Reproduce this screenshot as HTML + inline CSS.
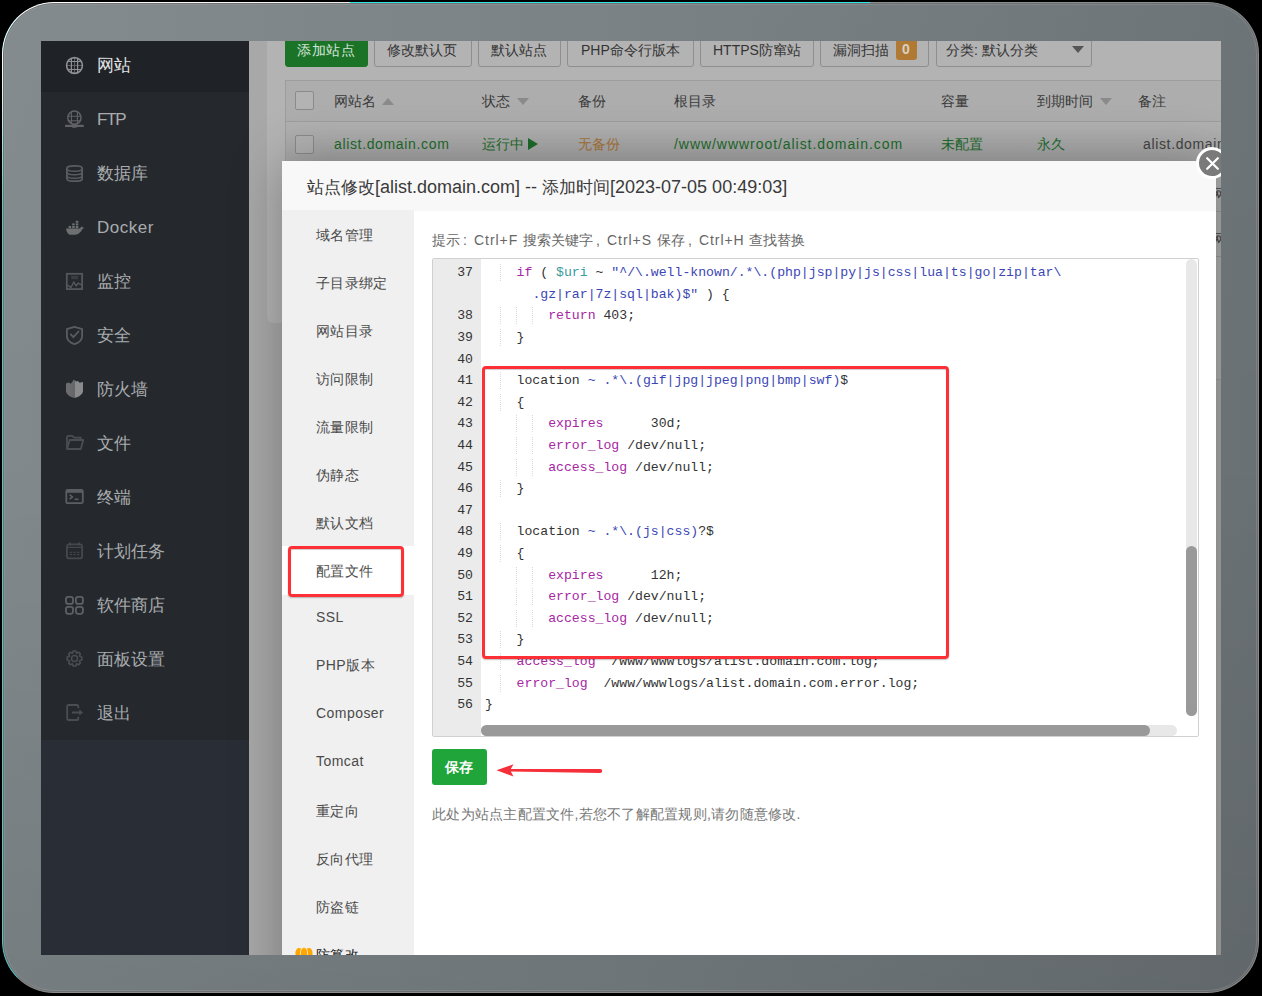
<!DOCTYPE html>
<html><head><meta charset="utf-8">
<style>
*{box-sizing:border-box}
html,body{margin:0;padding:0}
body{width:1262px;height:996px;background:#000;overflow:hidden;position:relative;font-family:"Liberation Sans",sans-serif;color:#333}
.a{position:absolute;white-space:nowrap}
#frame{position:absolute;left:2px;top:2px;width:1257px;height:991px;border-radius:52px;
 background:linear-gradient(180deg,rgba(255,255,255,.02) 0%,rgba(0,0,0,0) 45%,rgba(0,0,0,.09) 100%),linear-gradient(90deg,#81898c 0%,#788084 50%,#6a7175 100%);
 border:1px solid #8c8c8c;border-left-color:#4fc9c9;border-top-color:#8a9090}
#cy{position:absolute;left:350px;top:2px;width:520px;height:1px;background:#2ee8e8}
#hl{position:absolute;left:2px;top:2px;width:1257px;height:991px;border-radius:52px;border:1.5px solid #fff;border-right-color:transparent;border-bottom-color:transparent;-webkit-mask-image:linear-gradient(165deg,#000 0%,rgba(0,0,0,.9) 6%,transparent 16%)}
#frame2{position:absolute;left:3px;top:3px;width:1255px;height:989px;border-radius:51px;box-shadow:inset 0 0 0 1px rgba(90,90,90,.55), inset 0 0 0 2px rgba(160,160,160,.35)}
#vp{position:absolute;left:41px;top:41px;width:1180px;height:914px;overflow:hidden;background:#a8a8a8}
#side{position:absolute;left:0;top:0;width:208px;height:914px;background:#292d35}
.mi{position:absolute;left:0;width:208px;height:54px;background:#25292d}
.mi.act{background:#1f2226}
.mi span{position:absolute;left:56px;top:1.5px;font-size:17px;line-height:54px;color:#a9acaf}
.mi.act span{color:#e2e3e4}
.mi svg{position:absolute;left:25px;top:19.5px;width:18px;height:18px}
.btn{position:absolute;top:-10px;height:36px;border:1px solid #8e8e8e;border-radius:3px;background:#b3b3b3}
.t14{font-size:14px;line-height:20px}
.tri{position:absolute;width:0;height:0;border-left:6px solid transparent;border-right:6px solid transparent}
#dlg{position:absolute;left:241px;top:120px;width:934px;height:900px;background:#fff;box-shadow:1px 1px 50px rgba(0,0,0,.3)}
.ni{position:absolute;left:34px;font-size:14px;line-height:20px;color:#4a4a4a}
.code{font-family:"Liberation Mono",monospace;font-size:13.16px;color:#333;white-space:pre}
.ln{position:absolute;left:0;width:40px;text-align:right;height:21.6px;line-height:21.6px}
.cl{position:absolute;left:52px;height:21.6px;line-height:21.6px}
.k{color:#a626a4}.v{color:#3a9a9e}.s{color:#3b46b5}
.g{position:absolute;width:0;border-left:1px dotted #d9d9d9;height:17px}
.w{letter-spacing:.95px}
.fw{display:inline-block;width:14px;padding-left:3px}
</style></head><body>
<div id="frame"></div><div id="frame2"></div><div id="hl"></div><div id="cy"></div>
<div id="vp">
<div id="side">
<div class="mi act" style="top:-3.5px"><svg viewBox="0 0 18 18" style="overflow:visible"><circle cx="8.5" cy="8.5" r="7.9" fill="none" stroke="#8e9092" stroke-width="1.6"/><path d="M5.4 1.6v13.8M11.6 1.6v13.8M1.6 4.5h13.8M1.6 12.5h13.8" stroke="#8e9092" stroke-width="1.2"/><path d="M8.5 1v15M1 8.5h15" stroke="#8e9092" stroke-width="1" opacity=".55"/></svg><span>网站</span></div>
<div class="mi" style="top:50.5px"><svg viewBox="0 0 18 18" style="overflow:visible"><circle cx="8.4" cy="6.7" r="6.6" fill="none" stroke="#606265" stroke-width="1.5"/><path d="M5.4 1v11.5M11.4 1v11.5M2 5.2h12.8M2 9.8h12.8" stroke="#606265" stroke-width="1.1"/><path d="M-0.9 14.9h18.7" stroke="#606265" stroke-width="2.2"/><rect x="5.9" y="13.2" width="5" height="3.6" rx="1" fill="#606265"/></svg><span style="letter-spacing:-1.2px">FTP</span></div>
<div class="mi" style="top:104.5px"><svg viewBox="0 0 18 18" style="overflow:visible"><path d="M0.9 3.2C0.9 1.5 4.3 0.9 8.5 0.9S16.1 1.5 16.1 3.2V13.9C16.1 15.6 12.7 16.2 8.5 16.2S0.9 15.6 0.9 13.9Z" fill="none" stroke="#5a5d60" stroke-width="1.8"/><path d="M0.9 3.5C0.9 5.2 4.3 6.3 8.5 6.3S16.1 5.2 16.1 3.5M0.9 6.9C0.9 8.6 4.3 9.7 8.5 9.7S16.1 8.6 16.1 6.9M0.9 10.4C0.9 12.1 4.3 13.2 8.5 13.2S16.1 12.1 16.1 10.4" fill="none" stroke="#5a5d60" stroke-width="1.5"/></svg><span>数据库</span></div>
<div class="mi" style="top:158.5px"><svg viewBox="0 0 18 18" style="overflow:visible"><path d="M0 9.4H14.2C14.6 8.2 15.4 7.8 15.6 7.6L16.8 8.4C17.4 8.3 17.9 8.6 18 8.8C17.6 9.6 17 10 16.3 10C15 13.5 12 15.8 7.5 15.8H5C2.5 15.8 0.6 13.5 0 9.4Z" fill="#6d6f71"/><rect x="2.6" y="7" width="2.5" height="2.2" fill="#6d6f71"/><rect x="6.2" y="7" width="2.5" height="2.2" fill="#6d6f71"/><rect x="9.8" y="7" width="2.5" height="2.2" fill="#6d6f71"/><rect x="6.2" y="4.4" width="2.5" height="2" fill="#6d6f71"/><rect x="9.8" y="4.4" width="2.5" height="2" fill="#6d6f71"/><rect x="9.8" y="1.8" width="2.5" height="2" fill="#6d6f71"/></svg><span style="letter-spacing:.5px">Docker</span></div>
<div class="mi" style="top:212.5px"><svg viewBox="0 0 18 18" style="overflow:visible"><rect x="0.8" y="0.8" width="15.3" height="15.3" fill="none" stroke="#55585b" stroke-width="1.8"/><rect x="5.2" y="2.8" width="6.8" height="3.4" fill="#55585b" opacity=".45"/><path d="M1.2 11.8L4.8 14.6 7.8 9.2 10.2 12.8 12.2 10.2 16 12.2" fill="none" stroke="#55585b" stroke-width="1.4"/></svg><span>监控</span></div>
<div class="mi" style="top:266.5px"><svg viewBox="0 0 18 18" style="overflow:visible"><path d="M8.5 -0.1C11 0.5 13.8 1.2 16.1 2.1V9.2C16.1 13 12.5 15.8 8.5 17.1 4.5 15.8 0.9 13 0.9 9.2V2.1C3.2 1.2 6 0.5 8.5 -0.1Z" fill="none" stroke="#5a5d60" stroke-width="1.8"/><path d="M4.4 6.9L7.4 10.1 13 4" fill="none" stroke="#5a5d60" stroke-width="1.8"/></svg><span>安全</span></div>
<div class="mi" style="top:320.5px"><svg viewBox="0 0 18 18" style="overflow:visible"><defs><linearGradient id="fwg" x1="0" x2="1" y1="0" y2="0"><stop offset="0" stop-color="#6c6e70"/><stop offset=".5" stop-color="#646668"/><stop offset=".52" stop-color="#8a8b8c"/><stop offset="1" stop-color="#8a8b8c"/></linearGradient></defs><path d="M0 2.6L2.8 1.5 4.6 2.8 6.2 1 7.8-1.5 10.2 0.5 12 0 13.5 1.8 17 1V10C17 13 13 16 8.5 17 4 16 0 13 0 10Z" fill="url(#fwg)"/></svg><span>防火墙</span></div>
<div class="mi" style="top:374.5px"><svg viewBox="0 0 18 18" style="overflow:visible"><path d="M1 14V2.3C1 1.5 1.6 0.9 2.4 0.9H6.2L8.2 2.6H14.6V4.8" fill="none" stroke="#4b4e51" stroke-width="1.8"/><path d="M1 14L3.7 5H17.3L14.8 14Z" fill="none" stroke="#4b4e51" stroke-width="1.8" stroke-linejoin="round"/></svg><span>文件</span></div>
<div class="mi" style="top:428.5px"><svg viewBox="0 0 18 18" style="overflow:visible"><rect x="0.3" y="0.8" width="16.5" height="13.4" rx="1.5" fill="none" stroke="#5c5f62" stroke-width="1.8"/><rect x="0.3" y="0.8" width="16.5" height="3" fill="#5c5f62"/><path d="M3.6 5.6L6.4 7.9 3.6 10.2" fill="none" stroke="#5c5f62" stroke-width="1.6"/><path d="M8.6 10.3H12.5" stroke="#5c5f62" stroke-width="1.5"/></svg><span>终端</span></div>
<div class="mi" style="top:482.5px"><svg viewBox="0 0 18 18" style="overflow:visible"><rect x="0.9" y="1.4" width="15.2" height="14" rx="2.2" fill="none" stroke="#46494c" stroke-width="1.8"/><path d="M1.5 4.4H15.5" stroke="#46494c" stroke-width="1.2"/><path d="M4 -0.6V2.6M13 -0.6V2.6" stroke="#46494c" stroke-width="1.8"/><path d="M3.6 9.3H6M7.3 9.3H9.7M11 9.3H13.4M3.6 11.6H6M7.3 11.6H9.7M11 11.6H13.4" stroke="#46494c" stroke-width="1"/></svg><span>计划任务</span></div>
<div class="mi" style="top:536.5px"><svg viewBox="0 0 18 18" style="overflow:visible"><rect x="0" y="-0.1" width="7" height="7" rx="2.2" fill="none" stroke="#5e6163" stroke-width="1.8"/><rect x="9.9" y="-0.1" width="7" height="7" rx="2.2" fill="none" stroke="#5e6163" stroke-width="1.8"/><rect x="0" y="9.8" width="7" height="7" rx="2.2" fill="none" stroke="#5e6163" stroke-width="1.8"/><rect x="9.9" y="9.8" width="7" height="7" rx="2.2" fill="none" stroke="#5e6163" stroke-width="1.8"/></svg><span>软件商店</span></div>
<div class="mi" style="top:590.5px"><svg viewBox="0 0 18 18" style="overflow:visible"><circle cx="8.5" cy="7.5" r="3" fill="none" stroke="#4b4e51" stroke-width="1.5"/><path d="M7.2 0H9.8L10.6 2.2 12.7 1.2 14.3 2.9 13.4 5 15.9 6.2V8.8L13.4 10 14.3 12.1 12.7 13.8 10.6 12.8 9.8 15H7.2L6.4 12.8 4.3 13.8 2.7 12.1 3.6 10 1.1 8.8V6.2L3.6 5 2.7 2.9 4.3 1.2 6.4 2.2Z" fill="none" stroke="#4b4e51" stroke-width="1.6" stroke-linejoin="round"/></svg><span>面板设置</span></div>
<div class="mi" style="top:644.5px"><svg viewBox="0 0 18 18" style="overflow:visible"><path d="M12.3 3.2V1.3C12.3.5 11.8 0 11 0H2.6C1.8 0 1.2.5 1.2 1.3V13.7C1.2 14.5 1.8 15 2.6 15H11C11.8 15 12.3 14.5 12.3 13.7V11.8" fill="none" stroke="#4b4e51" stroke-width="1.8"/><path d="M6 7.5H14" stroke="#4b4e51" stroke-width="2"/><path d="M13.3 4.5L17 7.5 13.3 10.5Z" fill="#4b4e51"/></svg><span>退出</span></div>
</div>
<div class="a" style="left:226px;top:-20px;width:980px;height:302px;background:#b3b3b3;border-radius:6px"></div>
<div class="btn" style="left:244px;width:83px;background:#1b7328;border-color:#1b7328"></div>
<div class="btn" style="left:333px;width:98px"></div>
<div class="btn" style="left:437px;width:83px"></div>
<div class="btn" style="left:526px;width:127px"></div>
<div class="btn" style="left:659px;width:114px"></div>
<div class="btn" style="left:779px;width:109px"></div>
<div class="btn" style="left:895px;width:156px"></div>
<div class="a t14" style="left:256px;top:-1px;color:#d5e3d7;letter-spacing:.5px">添加站点</div>
<div class="a t14" style="left:346px;top:-1px;color:#333">修改默认页</div>
<div class="a t14" style="left:450px;top:-1px;color:#333">默认站点</div>
<div class="a t14" style="left:540px;top:-1px;color:#333">PHP命令行版本</div>
<div class="a t14" style="left:672px;top:-1px;color:#333">HTTPS防窜站</div>
<div class="a t14" style="left:792px;top:-1px;color:#333">漏洞扫描</div>
<div class="a" style="left:855px;top:-5px;width:21px;height:24px;background:#b07a34;border-radius:3px"></div>
<div class="a" style="left:861px;top:-2px;font-size:14px;line-height:20px;font-weight:bold;color:#d9d0c4">0</div>
<div class="a t14" style="left:905px;top:-1px;color:#333">分类: 默认分类</div>
<div class="tri" style="left:1031px;top:5px;border-top:7px solid #555;border-left-width:6.5px;border-right-width:6.5px"></div>
<div class="a" style="left:244px;top:39px;width:950px;height:300px;border:1px solid #9d9d9d;background:#adadad"></div>
<div class="a" style="left:245px;top:80px;width:950px;height:1px;background:#9d9d9d"></div>
<div class="a" style="left:245px;top:81px;width:950px;height:40px;background:linear-gradient(#b1b1b1,#a6a6a6)"></div>
<div class="a" style="left:245px;top:125px;width:950px;height:1px;background:#9d9d9d"></div>
<div class="a" style="left:245px;top:170px;width:950px;height:1px;background:#9a9a9a"></div>
<div class="a" style="left:245px;top:215px;width:950px;height:1px;background:#989898"></div>
<div class="a t14" style="left:1171px;top:143px;color:#444">网站</div>
<div class="a t14" style="left:1171px;top:188px;color:#444">网站</div>
<div class="a" style="left:254px;top:50px;width:19px;height:19px;border:1px solid #8a8a8a;border-radius:2px;background:#b3b3b3"></div>
<div class="a" style="left:254px;top:93.5px;width:19px;height:19px;border:1px solid #8a8a8a;border-radius:2px;background:#b1b1b1"></div>
<div class="a t14" style="left:293px;top:50px;color:#3a3a3a">网站名</div>
<div class="a t14" style="left:441px;top:50px;color:#3a3a3a">状态</div>
<div class="a t14" style="left:537px;top:50px;color:#3a3a3a">备份</div>
<div class="a t14" style="left:633px;top:50px;color:#3a3a3a">根目录</div>
<div class="a t14" style="left:900px;top:50px;color:#3a3a3a">容量</div>
<div class="a t14" style="left:996px;top:50px;color:#3a3a3a">到期时间</div>
<div class="a t14" style="left:1097px;top:50px;color:#3a3a3a">备注</div>
<div class="tri" style="left:341px;top:57px;border-bottom:7px solid #8a8a8a"></div>
<div class="tri" style="left:476px;top:57px;border-top:7px solid #8a8a8a"></div>
<div class="tri" style="left:1059px;top:57px;border-top:7px solid #8a8a8a"></div>
<div class="a t14" style="left:293px;top:93px;color:#1d6b2b;letter-spacing:.65px;">alist.domain.com</div>
<div class="a t14" style="left:441px;top:93px;color:#1d6b2b;">运行中</div>
<div class="a t14" style="left:537px;top:93px;color:#a6733a;">无备份</div>
<div class="a t14" style="left:633px;top:93px;color:#1d6b2b;letter-spacing:.95px;">/www/wwwroot/alist.domain.com</div>
<div class="a t14" style="left:900px;top:93px;color:#1d6b2b;">未配置</div>
<div class="a t14" style="left:996px;top:93px;color:#1d6b2b;">永久</div>
<div class="a t14" style="left:1102px;top:93px;color:#444;letter-spacing:.65px;">alist.domain.com</div>
<div class="a" style="left:487px;top:97px;width:0;height:0;border-top:6px solid transparent;border-bottom:6px solid transparent;border-left:10px solid #1d6b2b"></div>
<div id="dlg">
<div class="a" style="left:0;top:0;width:934px;height:50px;background:#f8f8f8"></div>
<div class="a" style="left:25px;top:14px;font-size:17px;line-height:24px;color:#3a3a3a">站点修改<span style="font-size:18px;letter-spacing:0px">[alist.domain.com] -- </span>添加时间<span style="font-size:18px">[2023-07-05 00:49:03]</span></div>
<div class="a" style="left:0;top:49px;width:132px;height:851px;background:#f0f0f0"></div>
<div class="a" style="left:0;top:385px;width:132px;height:49px;background:#fff"></div>
<div class="ni" style="top:64px;letter-spacing:.3px">域名管理</div>
<div class="ni" style="top:112px;letter-spacing:.3px">子目录绑定</div>
<div class="ni" style="top:160px;letter-spacing:.3px">网站目录</div>
<div class="ni" style="top:208px;letter-spacing:.3px">访问限制</div>
<div class="ni" style="top:256px;letter-spacing:.3px">流量限制</div>
<div class="ni" style="top:304px;letter-spacing:.3px">伪静态</div>
<div class="ni" style="top:352px;letter-spacing:.3px">默认文档</div>
<div class="ni" style="top:400px;letter-spacing:.3px">配置文件</div>
<div class="ni" style="top:446px;letter-spacing:.45px">SSL</div>
<div class="ni" style="top:494px;letter-spacing:.45px">PHP版本</div>
<div class="ni" style="top:542px;letter-spacing:.45px">Composer</div>
<div class="ni" style="top:590px;letter-spacing:.45px">Tomcat</div>
<div class="ni" style="top:640px;letter-spacing:.3px">重定向</div>
<div class="ni" style="top:688px;letter-spacing:.3px">反向代理</div>
<div class="ni" style="top:736px;letter-spacing:.3px">防盗链</div>
<div class="ni" style="top:784px;letter-spacing:.3px;color:#222;letter-spacing:.3px">防篡改</div>
<svg class="a" style="left:13px;top:786px" width="18" height="12" viewBox="0 0 18 12"><ellipse cx="4" cy="6" rx="3.6" ry="5" fill="#ffa500"/><ellipse cx="14" cy="6" rx="3.6" ry="5" fill="#ffa500"/><ellipse cx="9" cy="6" rx="3.6" ry="5.5" fill="#ffa500" stroke="#fbe3b0" stroke-width="1"/></svg>
<div class="a" style="left:150px;top:69px;font-size:14px;line-height:20px;color:#666">提示<span class="fw">:</span><span class="w">Ctrl+F </span>搜索关键字<span class="fw">,</span><span class="w">Ctrl+S </span>保存<span class="fw">,</span><span class="w">Ctrl+H </span>查找替换</div>
<div class="a" style="left:150px;top:97px;width:767px;height:479px;border:1px solid #d0d0d0;border-radius:2px;background:#fff;overflow:hidden">
<div class="a" style="left:0;top:0;width:48px;height:477px;background:#ebebeb"></div>
<div class="ln code" style="top:3.2px">37</div>
<div class="cl code" style="top:3.2px">    <span class="k">if</span> ( <span class="v">$uri</span> ~ <span class="s">"^/\.well-known/.*\.(php|jsp|py|js|css|lua|ts|go|zip|tar\</span></div>
<div class="g" style="left:67px;top:5.2px"></div>
<div class="cl code" style="top:24.8px">      <span class="s">.gz|rar|7z|sql|bak)$"</span> ) {</div>
<div class="ln code" style="top:46.4px">38</div>
<div class="cl code" style="top:46.4px">        <span class="k">return</span> 403;</div>
<div class="g" style="left:67px;top:48.4px"></div>
<div class="g" style="left:83px;top:48.4px"></div>
<div class="g" style="left:99px;top:48.4px"></div>
<div class="ln code" style="top:68.0px">39</div>
<div class="cl code" style="top:68.0px">    }</div>
<div class="g" style="left:67px;top:70.0px"></div>
<div class="ln code" style="top:89.6px">40</div>
<div class="ln code" style="top:111.2px">41</div>
<div class="cl code" style="top:111.2px">    location <span class="s">~ .*\.(gif|jpg|jpeg|png|bmp|swf)</span>$</div>
<div class="g" style="left:67px;top:113.2px"></div>
<div class="ln code" style="top:132.8px">42</div>
<div class="cl code" style="top:132.8px">    {</div>
<div class="g" style="left:67px;top:134.8px"></div>
<div class="ln code" style="top:154.4px">43</div>
<div class="cl code" style="top:154.4px">        <span class="k">expires</span>      30d;</div>
<div class="g" style="left:83px;top:156.4px"></div>
<div class="g" style="left:99px;top:156.4px"></div>
<div class="ln code" style="top:176.0px">44</div>
<div class="cl code" style="top:176.0px">        <span class="k">error_log</span> /dev/null;</div>
<div class="g" style="left:83px;top:178.0px"></div>
<div class="g" style="left:99px;top:178.0px"></div>
<div class="ln code" style="top:197.6px">45</div>
<div class="cl code" style="top:197.6px">        <span class="k">access_log</span> /dev/null;</div>
<div class="g" style="left:83px;top:199.6px"></div>
<div class="g" style="left:99px;top:199.6px"></div>
<div class="ln code" style="top:219.2px">46</div>
<div class="cl code" style="top:219.2px">    }</div>
<div class="g" style="left:67px;top:221.2px"></div>
<div class="ln code" style="top:240.8px">47</div>
<div class="ln code" style="top:262.4px">48</div>
<div class="cl code" style="top:262.4px">    location <span class="s">~ .*\.(js|css)</span>?$</div>
<div class="g" style="left:67px;top:264.4px"></div>
<div class="ln code" style="top:284.0px">49</div>
<div class="cl code" style="top:284.0px">    {</div>
<div class="g" style="left:67px;top:286.0px"></div>
<div class="ln code" style="top:305.6px">50</div>
<div class="cl code" style="top:305.6px">        <span class="k">expires</span>      12h;</div>
<div class="g" style="left:83px;top:307.6px"></div>
<div class="g" style="left:99px;top:307.6px"></div>
<div class="ln code" style="top:327.2px">51</div>
<div class="cl code" style="top:327.2px">        <span class="k">error_log</span> /dev/null;</div>
<div class="g" style="left:83px;top:329.2px"></div>
<div class="g" style="left:99px;top:329.2px"></div>
<div class="ln code" style="top:348.8px">52</div>
<div class="cl code" style="top:348.8px">        <span class="k">access_log</span> /dev/null;</div>
<div class="g" style="left:83px;top:350.8px"></div>
<div class="g" style="left:99px;top:350.8px"></div>
<div class="ln code" style="top:370.4px">53</div>
<div class="cl code" style="top:370.4px">    }</div>
<div class="g" style="left:67px;top:372.4px"></div>
<div class="ln code" style="top:392.0px">54</div>
<div class="cl code" style="top:392.0px">    <span class="k">access_log</span>  /www/wwwlogs/alist.domain.com.log;</div>
<div class="g" style="left:67px;top:394.0px"></div>
<div class="ln code" style="top:413.6px">55</div>
<div class="cl code" style="top:413.6px">    <span class="k">error_log</span>  /www/wwwlogs/alist.domain.com.error.log;</div>
<div class="g" style="left:67px;top:415.6px"></div>
<div class="ln code" style="top:435.2px">56</div>
<div class="cl code" style="top:435.2px">}</div>
<div class="a" style="left:753px;top:0;width:11px;height:457px;background:#e8e8e8;border-radius:5.5px"></div>
<div class="a" style="left:753px;top:287px;width:11px;height:170px;background:#999;border-radius:5.5px"></div>
<div class="a" style="left:48px;top:466px;width:696px;height:11px;background:#e8e8e8;border-radius:5.5px"></div>
<div class="a" style="left:48px;top:466px;width:669px;height:11px;background:#999;border-radius:5.5px"></div>
</div>
<div class="a" style="left:6px;top:385px;width:116px;height:51px;border:3px solid #fe3036;border-radius:4px;box-shadow:0 1px 1.5px rgba(0,0,0,.25),inset 0 1px 1px rgba(0,0,0,.2)"></div>
<div class="a" style="left:200px;top:205px;width:467px;height:293px;border:3px solid #fe3036;border-radius:4px;box-shadow:0 1px 1.5px rgba(0,0,0,.25),inset 0 1px 1px rgba(0,0,0,.2)"></div>
<svg class="a" style="left:210px;top:600px" width="112" height="20" viewBox="0 0 112 20"><path d="M4.5 9.2 L21.5 3.2 L18.8 8.1 L108.2 7.9 Q110.2 7.9 110.2 9.9 Q110.2 11.9 108.2 11.9 L18.8 10.6 L21.5 15.6 Z" fill="#f5303a"/></svg>
<div class="a" style="left:150px;top:588px;width:55px;height:36px;background:#20a53a;border-radius:3px"></div>
<div class="a" style="left:163px;top:596px;font-size:14px;line-height:20px;color:#fff;letter-spacing:.3px;font-weight:600">保存</div>
<div class="a" style="left:150px;top:642.5px;font-size:14px;line-height:20px;color:#777;letter-spacing:.25px">此处为站点主配置文件,若您不了解配置规则,请勿随意修改.</div>
</div>
<div class="a" style="left:1155px;top:106px;width:32px;height:32px;border-radius:50%;background:#7a7a7a;border:3px solid #fff"><svg class="a" style="left:6.5px;top:6.5px" width="13" height="13" viewBox="0 0 13 13"><path d="M1.2 1.2L11.8 11.8M11.8 1.2L1.2 11.8" stroke="#fff" stroke-width="2.2" stroke-linecap="round"/></svg></div>
</div>
</body></html>
